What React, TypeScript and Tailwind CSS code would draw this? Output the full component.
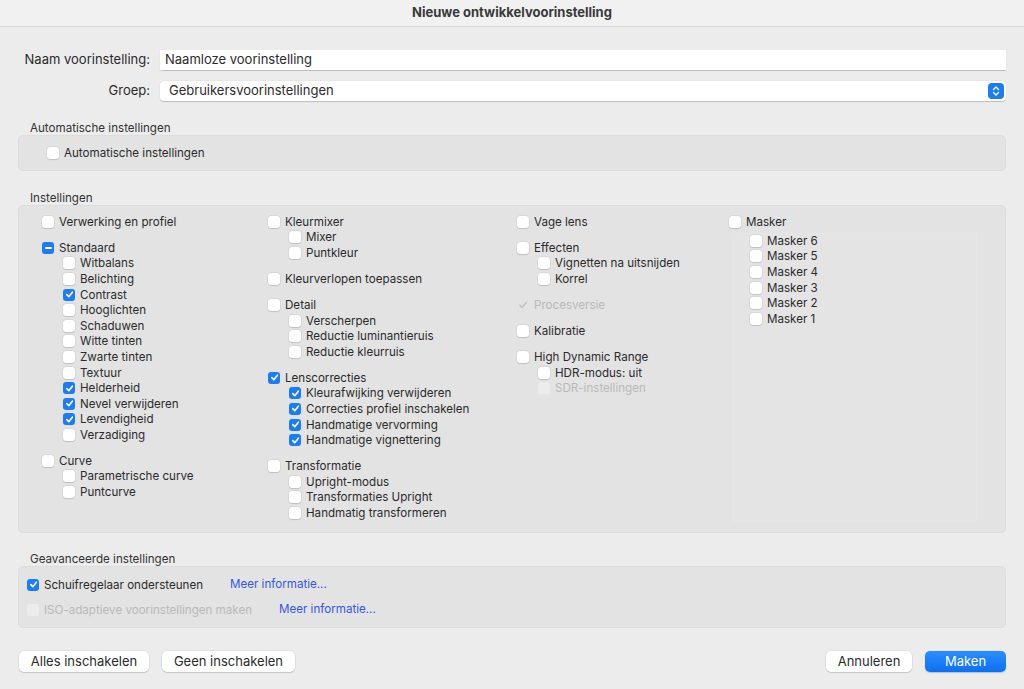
import React from "react";

type State = "off" | "on" | "mixed" | "disabled" | "ghost";

type Item = { label: string; state?: State };
type Group = { head: Item; items?: Item[] };

const font = { fontFamily: "Inter, 'Liberation Sans', sans-serif" };

function Box({ state = "off" }: { state?: State }) {
  if (state === "on") {
    return (
      <span className="w-[12px] h-[12px] shrink-0 rounded-[3px] bg-[#1b7cf4] flex items-center justify-center">
        <svg width="9" height="9" viewBox="0 0 10 10">
          <path d="M2 5.2 L4.2 7.4 L8.2 2.4" fill="none" stroke="white" strokeWidth="1.8" strokeLinecap="round" strokeLinejoin="round" />
        </svg>
      </span>
    );
  }
  if (state === "mixed") {
    return (
      <span className="w-[12px] h-[12px] shrink-0 rounded-[3px] bg-[#1b7cf4] flex items-center justify-center">
        <span className="w-[7px] h-[2px] bg-white rounded-full" />
      </span>
    );
  }
  if (state === "ghost") {
    return (
      <span className="w-[12px] h-[12px] shrink-0 flex items-center justify-center">
        <svg width="10" height="10" viewBox="0 0 10 10">
          <path d="M2 5.2 L4.2 7.4 L8.2 2.4" fill="none" stroke="#c2c2c2" strokeWidth="1.6" strokeLinecap="round" strokeLinejoin="round" />
        </svg>
      </span>
    );
  }
  if (state === "disabled") {
    return <span className="w-[12px] h-[12px] shrink-0 rounded-[3px] bg-[#ececec]" />;
  }
  return <span className="w-[12px] h-[12px] shrink-0 rounded-[3px] bg-white shadow-[0_0_0_0.5px_rgba(0,0,0,0.08),0_0.5px_1px_rgba(0,0,0,0.12)]" />;
}

function Row({ item, sub }: { item: Item; sub?: boolean }) {
  const dim = item.state === "disabled" || item.state === "ghost";
  return (
    <div className={`flex items-center h-[15.6px] gap-[5px] ${sub ? "pl-[21px]" : ""}`}>
      <Box state={item.state} />
      <span className={`text-[11.6px] leading-[14px] whitespace-nowrap ${dim ? "text-[#b9b9b9]" : "text-[#2b2b2b]"}`}>{item.label}</span>
    </div>
  );
}

function Column({ groups, width, subGap }: { groups: Group[]; width: string; subGap?: boolean }) {
  return (
    <div className={`flex flex-col gap-[10.4px] ${width}`}>
      {groups.map((g) => (
        <div key={g.head.label} className="flex flex-col">
          <Row item={g.head} />
          {g.items && (
            <div className={subGap ? "mt-[3.4px]" : ""}>
              {g.items.map((it) => (
                <Row key={it.label} item={it} sub />
              ))}
            </div>
          )}
        </div>
      ))}
    </div>
  );
}

const col1: Group[] = [
  { head: { label: "Verwerking en profiel" } },
  {
    head: { label: "Standaard", state: "mixed" },
    items: [
      { label: "Witbalans" },
      { label: "Belichting" },
      { label: "Contrast", state: "on" },
      { label: "Hooglichten" },
      { label: "Schaduwen" },
      { label: "Witte tinten" },
      { label: "Zwarte tinten" },
      { label: "Textuur" },
      { label: "Helderheid", state: "on" },
      { label: "Nevel verwijderen", state: "on" },
      { label: "Levendigheid", state: "on" },
      { label: "Verzadiging" },
    ],
  },
  { head: { label: "Curve" }, items: [{ label: "Parametrische curve" }, { label: "Puntcurve" }] },
];

const col2: Group[] = [
  { head: { label: "Kleurmixer" }, items: [{ label: "Mixer" }, { label: "Puntkleur" }] },
  { head: { label: "Kleurverlopen toepassen" } },
  {
    head: { label: "Detail" },
    items: [{ label: "Verscherpen" }, { label: "Reductie luminantieruis" }, { label: "Reductie kleurruis" }],
  },
  {
    head: { label: "Lenscorrecties", state: "on" },
    items: [
      { label: "Kleurafwijking verwijderen", state: "on" },
      { label: "Correcties profiel inschakelen", state: "on" },
      { label: "Handmatige vervorming", state: "on" },
      { label: "Handmatige vignettering", state: "on" },
    ],
  },
  {
    head: { label: "Transformatie" },
    items: [{ label: "Upright-modus" }, { label: "Transformaties Upright" }, { label: "Handmatig transformeren" }],
  },
];

const col3: Group[] = [
  { head: { label: "Vage lens" } },
  { head: { label: "Effecten" }, items: [{ label: "Vignetten na uitsnijden" }, { label: "Korrel" }] },
  { head: { label: "Procesversie", state: "ghost" } },
  { head: { label: "Kalibratie" } },
  {
    head: { label: "High Dynamic Range" },
    items: [{ label: "HDR-modus: uit" }, { label: "SDR-instellingen", state: "disabled" }],
  },
];

const col4: Group[] = [
  {
    head: { label: "Masker" },
    items: ["Masker 6", "Masker 5", "Masker 4", "Masker 3", "Masker 2", "Masker 1"].map((label) => ({ label })),
  },
];

function SectionLabel({ children, top = "mt-[20px]" }: { children: React.ReactNode; top?: string }) {
  return <div className={`${top} h-[14px] pl-[12px] text-[11.6px] leading-[14px] text-[#333]`}>{children}</div>;
}

function Button({ children, primary, width }: { children: React.ReactNode; primary?: boolean; width: string }) {
  return (
    <div
      className={`h-[21px] ${width} rounded-[5px] flex items-center justify-center text-[13px] ${
        primary
          ? "bg-gradient-to-b from-[#2a8dff] to-[#0b6ff2] text-white shadow-[0_0.5px_1px_rgba(0,0,0,0.2)]"
          : "bg-white text-[#2b2b2b] shadow-[0_0_0_0.5px_rgba(0,0,0,0.1),0_1px_1px_rgba(0,0,0,0.12)]"
      }`}
    >
      {children}
    </div>
  );
}

export default function App() {
  return (
    <div className="w-[1024px] h-[689px] bg-[#ececec] overflow-hidden" style={font}>
      <div className="h-[27px] bg-[#f1f1f1] border-b border-[#d8d8d8] flex items-center justify-center text-[13px] font-bold text-[#3a3a3a]">
        Nieuwe ontwikkelvoorinstelling
      </div>

      <div className="px-[18px]">
        <div className="mt-[23px] flex items-center gap-[10px]">
          <span className="w-[132px] text-right text-[13px] text-[#2b2b2b] whitespace-nowrap">Naam voorinstelling:</span>
          <div className="flex-1 h-[20px] bg-white shadow-[0_0.5px_1px_rgba(0,0,0,0.2)] flex items-center px-[5px] text-[13px] text-[#2b2b2b]">
            Naamloze voorinstelling
          </div>
        </div>

        <div className="mt-[11px] flex items-center gap-[10px]">
          <span className="w-[132px] text-right text-[13px] text-[#2b2b2b]">Groep:</span>
          <div className="flex-1 h-[20px] bg-white rounded-[4px] shadow-[0_0.5px_1px_rgba(0,0,0,0.2)] flex items-center justify-between pl-[9px] pr-[2px] text-[13px] text-[#2b2b2b]">
            <span>Gebruikersvoorinstellingen</span>
            <span className="w-[16px] h-[16px] rounded-[4px] bg-[#1b7cf4] flex items-center justify-center">
              <svg width="8" height="12" viewBox="0 0 8 12">
                <path d="M1.5 4.5 L4 2 L6.5 4.5 M1.5 7.5 L4 10 L6.5 7.5" fill="none" stroke="white" strokeWidth="1.4" strokeLinecap="round" strokeLinejoin="round" />
              </svg>
            </span>
          </div>
        </div>

        <SectionLabel>Automatische instellingen</SectionLabel>
        <div className="h-[36px] rounded-[5px] bg-[#e3e3e3] border border-[#dddddd] flex items-center pl-[28px]">
          <Row item={{ label: "Automatische instellingen" }} />
        </div>

        <SectionLabel>Instellingen</SectionLabel>
        <div className="h-[328px] rounded-[5px] bg-[#e3e3e3] border border-[#dddddd] pt-[8px] pl-[23px] flex">
          <Column groups={col1} width="w-[226px]" />
          <Column groups={col2} width="w-[249px]" />
          <Column groups={col3} width="w-[212px]" />
          <div className="relative w-[260px]">
            <div className="absolute left-[4px] top-[19px] w-[244px] bottom-[10px] bg-[#e4e4e4] border border-[#e6e6e6]" />
            <div className="relative">
              <Column groups={col4} width="w-[250px]" subGap />
            </div>
          </div>
        </div>

        <SectionLabel top="mt-[19px]">Geavanceerde instellingen</SectionLabel>
        <div className="h-[62px] rounded-[5px] bg-[#e3e3e3] border border-[#dddddd] pt-[5px] pl-[8px]">
          <div className="h-[25px] flex items-center">
            <div className="w-[203px]">
              <Row item={{ label: "Schuifregelaar ondersteunen", state: "on" }} />
            </div>
            <span className="text-[11.6px] text-[#3556e6]">Meer informatie...</span>
          </div>
          <div className="h-[25px] flex items-center">
            <div className="w-[252px]">
              <Row item={{ label: "ISO-adaptieve voorinstellingen maken", state: "disabled" }} />
            </div>
            <span className="text-[11.6px] text-[#3556e6]">Meer informatie...</span>
          </div>
        </div>

        <div className="mt-[23px] flex items-center">
          <div className="flex gap-[13px] pl-[1px]">
            <Button width="w-[130px]">Alles inschakelen</Button>
            <Button width="w-[133px]">Geen inschakelen</Button>
          </div>
          <div className="ml-auto flex gap-[13px]">
            <Button width="w-[86px]">Annuleren</Button>
            <Button width="w-[81px]" primary>Maken</Button>
          </div>
        </div>
      </div>
    </div>
  );
}
